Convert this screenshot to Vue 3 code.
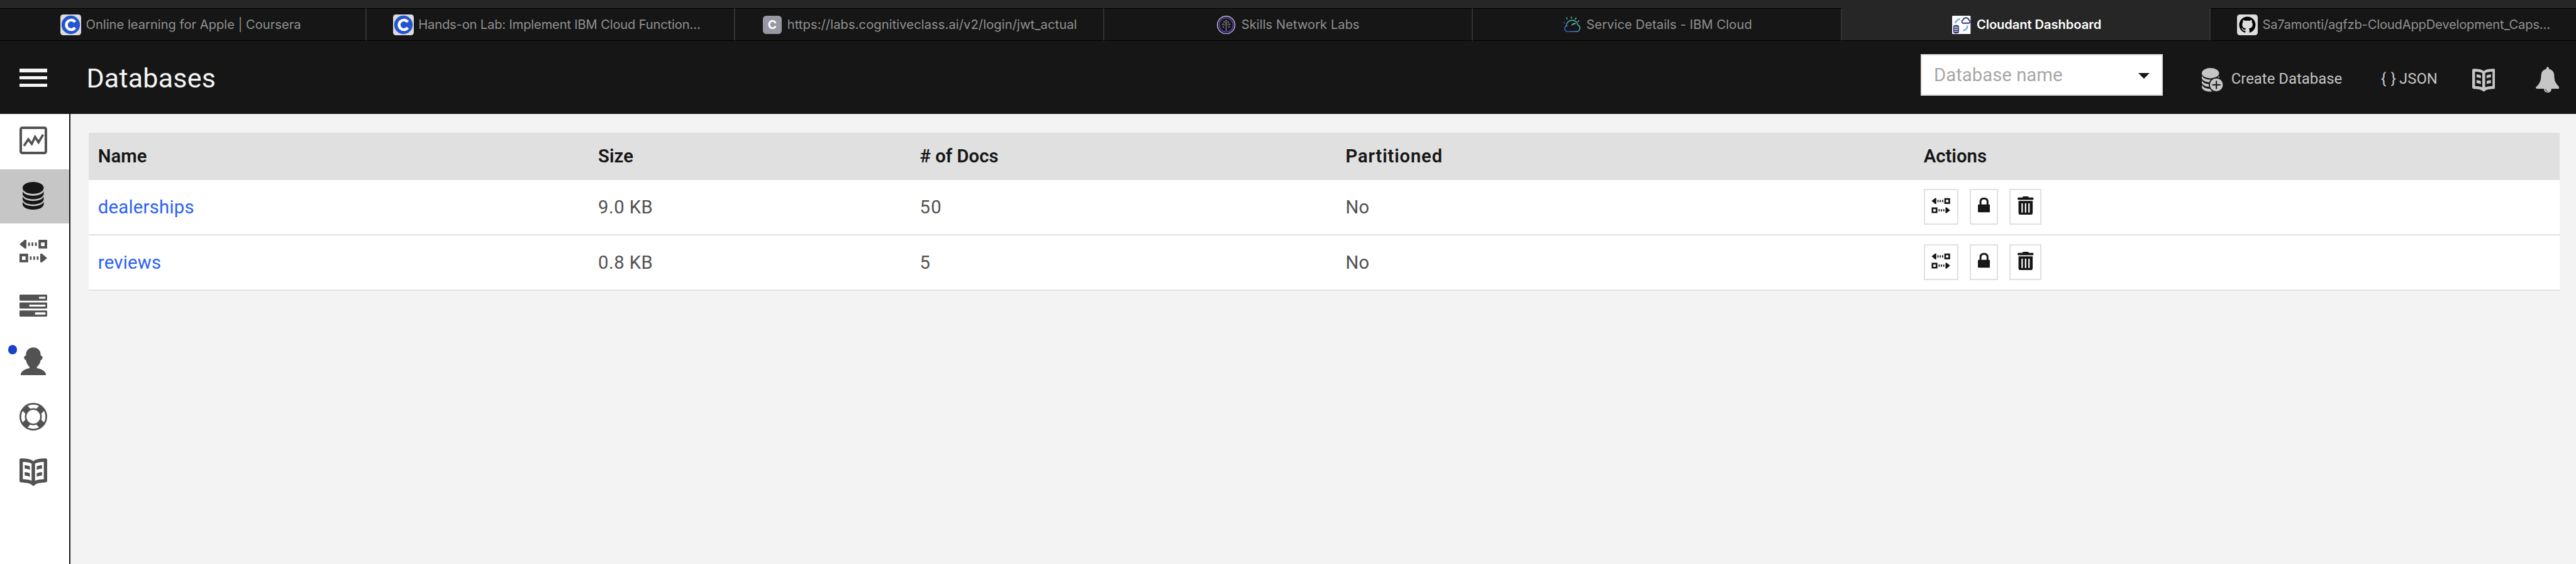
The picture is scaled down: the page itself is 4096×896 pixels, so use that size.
<script setup>
const tabs = [
  { icon: 'coursera', label: 'Online learning for Apple | Coursera', pad: 10.5, track: 0 },
  { icon: 'coursera', label: 'Hands-on Lab: Implement IBM Cloud Function…', pad: 4.6, track: -0.018 },
  { icon: 'letter', label: 'https://labs.cognitiveclass.ai/v2/login/jwt_actual', pad: 4.8, track: 0.009 },
  { icon: 'skills', label: 'Skills Network Labs', pad: 19.6, track: 0.005 },
  { icon: 'cloud', label: 'Service Details - IBM Cloud', pad: 15.5, track: 0.008 },
  { icon: 'cloudant', label: 'Cloudant Dashboard', pad: 19.2, track: -0.008, active: true },
  { icon: 'github', label: 'Sa7amonti/agfzb-CloudAppDevelopment_Caps…', pad: 4.6, track: -0.02 }
]
const nav = [
  { id: 'chart' },
  { id: 'db', active: true },
  { id: 'repl' },
  { id: 'server' },
  { id: 'user', dot: true },
  { id: 'help' },
  { id: 'book' }
]
const rows = [
  { name: 'dealerships', size: '9.0 KB', docs: '50', part: 'No' },
  { name: 'reviews', size: '0.8 KB', docs: '5', part: 'No' }
]
</script>

<template>
  <div class="page">
    <svg class="defs" aria-hidden="true">
      <defs>
        <linearGradient id="sky" x1="0" y1="1" x2="0.7" y2="0">
          <stop offset="0" stop-color="#2450b8" />
          <stop offset="0.55" stop-color="#4ba0cf" />
          <stop offset="1" stop-color="#5fd0a8" />
        </linearGradient>
        <symbol id="i-chart" viewBox="0 0 48 48">
          <rect x="2.2" y="2.2" width="43.6" height="43.6" rx="2.6" fill="none" stroke="currentColor" stroke-width="4.4" />
          <path d="M7.7 33.5 15.3 22.3 21.3 30 27 18 33 27.3 41 14" fill="none" stroke="currentColor" stroke-width="4" />
        </symbol>
        <symbol id="i-db" viewBox="0 0 48 48">
          <ellipse cx="23.7" cy="10.4" rx="18.3" ry="10.4" />
          <path d="M5.4 16.5C8 22 16 24 23.7 24s15.700-2 18.300-7.500V21.500C40 27.500 32 30 23.700 30S7.500 27.500 5.400 21.500Z" />
          <path d="M5.400 25.500C8 31 16 33 23.700 33s15.700-2 18.300-7.500V30.500C40 36.500 32 39 23.700 39S7.500 36.500 5.400 30.500Z" />
          <path d="M5.400 34.500C8 40 16 42 23.700 42s15.700-2 18.300-7.500V39.500C40 45.500 32 48 23.700 48S7.500 45.500 5.400 39.500Z" />
        </symbol>
        <symbol id="i-repl" viewBox="0 0 48 48">
          <path d="M0 12 9 4.500H12V19.500H9ZM15 9h3v6h-3ZM21 9h3v6h-3ZM27 9h3v6h-3Z" />
          <path fill-rule="evenodd" d="M33 4.500H48V19.500H33ZM37.300 9v6.200h6.300V9ZM0 28.500H15V43.500H0ZM4.300 33v6.200h6.300V33Z" />
          <path d="M48 36 39 28.500H36V43.500H39ZM18 33h3v6h-3ZM24 33h3v6h-3ZM30 33h3v6h-3Z" />
        </symbol>
        <symbol id="i-server" viewBox="0 0 48 48">
          <path fill-rule="evenodd" d="M1.500 3.300H46.500Q48 3.300 48 4.800V12.300Q48 13.800 46.500 13.800H1.500Q0 13.800 0 12.300V4.800Q0 3.300 1.500 3.300ZM34 7V10.500H45V7Z" />
          <path fill-rule="evenodd" d="M1.500 17H46.500Q48 17 48 18.500V26Q48 27.500 46.500 27.500H1.500Q0 27.500 0 26V18.500Q0 17 1.500 17ZM17 20.700V24H45V20.700Z" />
          <path fill-rule="evenodd" d="M1.500 30.900H46.500Q48 30.900 48 32.400V39.900Q48 41.400 46.500 41.400H1.500Q0 41.400 0 39.900V32.400Q0 30.900 1.500 30.900ZM27 34.200V38H45V34.200Z" />
        </symbol>
        <symbol id="i-user" viewBox="0 0 48 48">
          <path d="M24 0C31 0 36.700 5 36.700 12V14C39 14 40 16 40 18C40 20 38.500 21.500 36.700 22C36 27 33.500 31 30.300 33.500V36C39 37 46 42 46 48H2C2 42 9 37 17.300 36V33.500C14.500 31 12 27 11.300 22C9.500 21.500 8 20 8 18C8 16 9 14 11.300 14V12C11.300 5 17 0 24 0Z" />
        </symbol>
        <symbol id="i-help" viewBox="0 0 48 48">
          <g fill="none" stroke="currentColor">
            <circle cx="24" cy="24" r="22.500" stroke-width="3" />
            <circle cx="24" cy="24" r="13.300" stroke-width="2.800" />
            <path d="M33 15 39.300 8.700M15 15 8.700 8.700M15 33 8.700 39.300M33 33 39.300 39.300" stroke-width="12" />
          </g>
        </symbol>
        <symbol id="i-book" viewBox="0 0 48 48">
          <path fill-rule="evenodd" d="M3 .300C12 .300 20 1.500 24 5.200C28 1.500 36 .300 45 .300Q48 .300 48 3V39Q48 41.500 46 41.800C37 42.500 29 43.500 26.500 46.300Q24 49.500 21.500 46.300C19 43.500 11 42.500 2 41.800Q0 41.500 0 39V3Q0 .300 3 .300ZM5.800 6.300V36.300C11 36.500 16 37 21 39V9.300C17 7.300 12 6.500 5.800 6.300ZM42.200 6.300C36 6.500 31 7.300 27 9.300V39C32 37 37 36.500 42.200 36.300Z" />
          <path d="M9 12C13 12.200 16 13 18 14.300V20.300C16 19 13 18.500 9 18ZM9 24C13 24.200 16 25 18 26.300V32.300C16 31 13 30.500 9 30ZM39 12C35 12.200 32 13 30 14.300V20.300C32 19 35 18.500 39 18ZM39 24C35 24.200 32 25 30 26.300V32.300C32 31 35 30.500 39 30Z" />
        </symbol>
        <symbol id="i-lock" viewBox="0 0 21 32">
          <path d="M4.500 15V9.500C4.500 5.500 7 3.600 10.600 3.600S16.700 5.500 16.700 9.500V15" fill="none" stroke="currentColor" stroke-width="3.200" />
          <rect x="0" y="14" width="21" height="13.700" rx="1.500" />
        </symbol>
        <symbol id="i-trash" viewBox="0 0 28 32">
          <path d="M8.300 2Q8.800 0 10.500 0H17.500Q19.200 0 19.700 2H26.500Q28 2.300 28 4T26.500 6H1.500Q0 5.700 0 4T1.500 2Z" />
          <path fill-rule="evenodd" d="M1.700 8H26.300V28.500Q26.300 32 22.800 32H5.200Q1.700 32 1.700 28.500ZM6.800 12V28H9.100V12ZM12.800 12V28H15.200V12ZM18.700 12V28H21.100V12Z" />
        </symbol>
      </defs>
    </svg>

    <div class="strip"></div>
    <nav class="tabs">
      <div
        v-for="t in tabs"
        :key="t.label"
        class="tab"
        :class="{ active: t.active }"
        :style="{ paddingLeft: t.pad + 'rem', letterSpacing: t.track + 'rem' }"
      >
        <svg v-if="t.icon === 'coursera'" class="fav big" viewBox="0 0 36 36">
          <rect width="36" height="36" rx="5" fill="#dcdcdc" />
          <circle cx="18" cy="18" r="16" fill="#2455cf" />
          <path d="M25.500 13.200A8.300 8.300 0 1 0 25.500 22.800" fill="none" stroke="#fff" stroke-width="4.800" />
        </svg>
        <span v-else-if="t.icon === 'letter'" class="fav letter">C</span>
        <svg v-else-if="t.icon === 'skills'" class="fav" viewBox="0 0 32 32">
          <circle cx="16" cy="16" r="15.200" fill="none" stroke="#c5b8ec" stroke-width="1.500" />
          <circle cx="16" cy="16" r="12.300" fill="none" stroke="#6a4bc4" stroke-width="1.500" />
          <path d="M16 27V19" stroke="#6a4bc4" stroke-width="2.200" />
          <path d="M16 20V9M16 18 11 14M16 18 21 14M16 13 13 10.500M16 13 19 10.500" stroke="#5a5a5e" stroke-width="1.300" />
          <g fill="#66666a">
            <circle cx="16" cy="8.500" r="1.700" /><circle cx="12.500" cy="11" r="1.600" /><circle cx="19.500" cy="11" r="1.600" />
            <circle cx="10" cy="15" r="1.600" /><circle cx="22" cy="15" r="1.600" /><circle cx="16" cy="14" r="1.700" />
            <circle cx="11" cy="19.500" r="1.600" /><circle cx="21" cy="19.500" r="1.600" />
          </g>
        </svg>
        <svg v-else-if="t.icon === 'cloud'" class="fav" viewBox="0 0 32 32">
          <g fill="none" stroke="url(#sky)" stroke-width="1.700">
            <path d="M8 27.500H24.500A6 6 0 0 0 27 16C26.500 11 22.500 8 17 8S7.500 12 7 17.500A5.500 5.500 0 0 0 8 27.500Z" />
            <path d="M7 17.500Q8.500 17.500 9.500 18.500M16.500 17Q18.500 13.200 23.500 13.500" />
            <path d="M9 6 7.300 3M2.500 11.500 5 13M29.500 8.500 27 10.500" />
            <path d="M22.500 6.500 24.300 3.500" stroke="#5fd0a8" />
          </g>
          <path d="M16 5V1.500" stroke="#56b9bd" stroke-width="1.700" />
        </svg>
        <svg v-else-if="t.icon === 'cloudant'" class="fav" viewBox="0 0 32 32">
          <rect width="32" height="32" rx="1.500" fill="#fff" />
          <path d="M18.500 12.800A3 3 0 0 1 19 7.300 5.200 5.200 0 0 1 29 7.300 3 3 0 0 1 29.500 12.800Z" fill="none" stroke="#323a7c" stroke-width="2.100" />
          <path d="M14 5.500Q7 6.500 5.500 13M26.500 17Q27.500 23.500 19 26" fill="none" stroke="#6ba6ea" stroke-width="2.500" />
          <rect x="2" y="16" width="10" height="14.500" rx="3.500" fill="#323a7c" />
          <path d="M3.500 19.800H10.500M3.500 23.300H10.500M3.500 26.800H10.500" stroke="#fff" stroke-width="1.200" />
        </svg>
        <svg v-else class="fav big" viewBox="0 0 36 36">
          <rect width="36" height="36" rx="5" fill="#dcdcdc" />
          <g transform="translate(3.800 3.800) scale(1.775)">
            <path fill="#000" d="M8 0C3.580 0 0 3.580 0 8c0 3.540 2.290 6.530 5.470 7.590.4.070.55-.17.55-.38 0-.19-.01-.82-.01-1.490-2.010.37-2.530-.49-2.690-.94-.09-.23-.48-.94-.82-1.130-.28-.15-.68-.52-.01-.53.63-.01 1.080.58 1.230.82.72 1.210 1.870.87 2.330.66.07-.52.28-.87.51-1.070-1.780-.2-3.640-.89-3.640-3.950 0-.87.31-1.590.82-2.150-.08-.2-.36-1.020.08-2.120 0 0 .67-.21 2.200.82.64-.18 1.320-.27 2-.27s1.360.09 2 .27c1.530-1.040 2.200-.82 2.200-.82.44 1.100.16 1.920.08 2.120.51.56.82 1.270.82 2.150 0 3.070-1.870 3.750-3.650 3.950.29.25.54.73.54 1.480 0 1.070-.01 1.930-.01 2.200 0 .21.15.46.55.38A8.010 8.010 0 0 0 16 8c0-4.420-3.580-8-8-8z" />
          </g>
        </svg>
        <span class="tab-label">{{ t.label }}</span>
      </div>
    </nav>

    <header class="bar">
      <div class="burger"><i></i><i></i><i></i></div>
      <h1>Databases</h1>
      <div class="select"><span>Database name</span><i class="caret"></i></div>
      <div class="tools">
        <div class="tool create">
          <svg viewBox="0 0 37 41">
            <ellipse cx="15" cy="9" rx="15" ry="9" />
            <path d="M0 13.500C2.500 18.500 9 20.300 15 20.300S27.500 18.500 30 13.500V18C28 23 21 25 15 25S2 23 0 18Z" />
            <path d="M0 21.500C2.500 26.500 9 28 15 28S27.500 26.500 30 21.500V26C28 31 21 33 15 33S2 31 0 26Z" />
            <path d="M0 29.500C2.500 34.500 9 36 15 36S27.500 34.500 30 29.500V34C28 39 21 41 15 41S2 39 0 34Z" />
            <circle cx="25.300" cy="29.300" r="12" fill="none" stroke="#161616" stroke-width="2.400" />
            <circle cx="25.300" cy="29.300" r="11.200" />
            <path d="M25.300 22V36.600M18 29.300H32.600" stroke="#161616" stroke-width="2.200" />
          </svg>
          <span>Create Database</span>
        </div>
        <div class="tool json"><span>{ }</span><span>JSON</span></div>
        <svg class="tool docs"><use href="#i-book" /></svg>
        <svg class="tool bell" viewBox="0 0 41.400 44.700">
          <path d="M20.700 0C22 0 22.800 2.200 23.300 4C28 5 31 8 31.700 12.500C32.500 18 32 23 35 28C37 31.500 39.500 33.500 41.200 35.500Q41.800 38.300 39 38.300H27C27.500 42.500 24.500 44.700 20.700 44.700S14 42.500 14.400 38.300H2.400Q-.400 38.300 .2 35.500C2 33.500 4.500 31.500 6.400 28C9.400 23 8.900 18 9.700 12.500C10.400 8 13.400 5 18.100 4C18.600 2.200 19.400 0 20.700 0Z" />
          <path d="M16.600 38.800Q17.200 42.400 20.900 42.800" fill="none" stroke="#161616" stroke-width="1" />
        </svg>
      </div>
    </header>

    <div class="body">
      <aside>
        <div v-for="n in nav" :key="n.id" class="nav" :class="{ active: n.active }">
          <i v-if="n.dot" class="dot"></i>
          <svg><use :href="'#i-' + n.id" /></svg>
        </div>
      </aside>
      <main>
        <div class="row head">
          <span>Name</span><span>Size</span><span># of Docs</span><span class="part">Partitioned</span><span>Actions</span>
        </div>
        <div v-for="r in rows" :key="r.name" class="row">
          <a>{{ r.name }}</a>
          <span class="size">{{ r.size }}</span>
          <span class="docs-n">{{ r.docs }}</span>
          <span>{{ r.part }}</span>
          <div class="actions">
            <button class="b-repl"><svg><use href="#i-repl" /></svg></button>
            <button class="b-lock"><svg><use href="#i-lock" /></svg></button>
            <button class="b-trash"><svg><use href="#i-trash" /></svg></button>
          </div>
        </div>
      </main>
    </div>
  </div>
</template>

<style>
/* 1rem equals ten layout units */
html { font-size: 9.1633px; overflow: hidden; }
body { margin: 0; overflow: hidden; background: #f3f3f3; }
</style>

<style scoped>
.page {
  display: flex;
  flex-direction: column;
  width: 100vw;
  height: 100vh;
  overflow: hidden;
  background: #f3f3f3;
  font-family: Roboto, "Liberation Sans", sans-serif;
  font-size: 3.2rem;
  line-height: 1;
  color: #525252;
}
.page * { box-sizing: border-box; }
svg { display: block; fill: currentColor; flex: none; }
.defs { position: absolute; width: 0; height: 0; }

.strip { flex: none; height: 1.4rem; background: #262626; }
.tabs {
  flex: none;
  display: grid;
  grid-template-columns: 63.6rem repeat(5, 64rem) 1fr;
  height: 5.7rem;
  font-family: Inter, sans-serif;
  font-size: 2.2rem;
  color: #919191;
}
.tab {
  display: flex;
  align-items: center;
  height: 5.7rem;
  padding-top: 0.1rem;
  background: #161616;
  border-top: 1px solid #000;
  border-bottom: 1px solid #000;
  border-right: 2px solid #333;
  white-space: nowrap;
}
.tab:last-child { border-right: 0; }
.tab.active {
  background: #262626;
  border-top-color: #262626;
  color: #fff;
  font-weight: 600;
}
.fav { width: 3.2rem; height: 3.2rem; margin-right: 1rem; flex: none; }
.fav.big { width: 3.6rem; height: 3.6rem; margin-right: 0.8rem; }
.letter {
  border-radius: 0.6rem;
  background: #9898a4;
  color: #fff;
  font-size: 2.1rem;
  font-weight: 700;
  line-height: 3.2rem;
  text-align: center;
}

.bar {
  flex: none;
  display: flex;
  align-items: center;
  height: 12.7rem;
  padding: 0 2.9rem 0 3.4rem;
  background: #161616;
  color: #f4f4f4;
}
.burger {
  display: flex;
  flex-direction: column;
  gap: 0.7rem;
  width: 4.8rem;
  margin-top: 0.1rem;
}
.burger i { height: 0.6rem; background: #f4f4f4; }
h1 {
  margin: 0.3rem 0 0 6.8rem;
  font-size: 4.7rem;
  font-weight: 400;
  line-height: 1.2;
  letter-spacing: 0.02rem;
}
.select {
  display: flex;
  align-items: center;
  justify-content: space-between;
  width: 42rem;
  height: 7.2rem;
  margin: 0 0 0.9rem auto;
  padding: 0.2rem 2rem 0 2.1rem;
  border: 2px solid #e0e0e0;
  background: #fff;
  color: #a8a8a8;
}
.caret {
  border: 1rem solid transparent;
  border-top: 1rem solid #161616;
  border-bottom: 0;
}
.tools {
  display: flex;
  align-items: center;
  height: 4.6rem;
  margin: 0.8rem 0 0 6.8rem;
  color: #c6c6c6;
  font-size: 2.6rem;
}
.tool { display: flex; align-items: center; }
.create { width: 24.5rem; white-space: nowrap; }
.create svg { width: 3.7rem; height: 4.1rem; margin-right: 1.4rem; }
.create span { margin-top: -0.2rem; letter-spacing: 0.005rem; }
.json { width: 9.8rem; margin-left: 6.6rem; justify-content: space-between; margin-top: -0.2rem; }
.json span:first-child { letter-spacing: 0.1rem; }
.docs { width: 4rem; height: 4rem; margin-left: 6rem; margin-top: 0.1rem; }
.bell { width: 4.14rem; height: 4.47rem; margin-left: 7rem; }

.body { flex: 1; display: flex; min-height: 0; }
aside { width: 12.2rem; background: #fff; border-right: 2px solid #161616; }
.nav {
  position: relative;
  display: flex;
  justify-content: center;
  height: 9.4rem;
  margin-bottom: 0.2rem;
  padding: 2.1rem 0.4rem 0 0;
}
.nav svg { width: 4.8rem; height: 4.8rem; }
.nav.active { background: #c6c6c6; color: #161616; }
.dot {
  position: absolute;
  left: 1.4rem;
  top: 1.6rem;
  width: 1.6rem;
  height: 1.6rem;
  border-radius: 50%;
  background: #1a41cc;
}

main { flex: 1; padding: 3.2rem 2.8rem 0 3.2rem; }
.row {
  display: grid;
  grid-template-columns: 86.8rem 55.8rem 73.9rem 100.3rem 1fr;
  align-items: center;
  height: 9.6rem;
  padding: 0.2rem 0 0 1.6rem;
  border-bottom: 2px solid #e0e0e0;
  background: #fff;
}
.head {
  height: 8.2rem;
  padding-top: 0;
  border: 0;
  background: #e0e0e0;
  color: #161616;
  font-weight: 600;
}
.head .part { letter-spacing: 0.085rem; }
.row a { color: #2b62f5; letter-spacing: 0.025rem; }
.size { letter-spacing: 0.045rem; }
.docs-n { letter-spacing: 0.15rem; }
.actions { display: flex; gap: 2rem; margin-top: -0.2rem; }
button {
  display: flex;
  justify-content: center;
  height: 6.2rem;
  padding: 1rem 0 0;
  border: 2px solid #e0e0e0;
  background: #fff;
  color: #161616;
}
.b-repl { width: 6rem; }
.b-lock { width: 4.9rem; }
.b-trash { width: 5.6rem; }
button svg { height: 3.2rem; }
.b-repl svg { width: 3.3rem; }
.b-lock svg { width: 2.1rem; }
.b-trash svg { width: 2.8rem; }
</style>
